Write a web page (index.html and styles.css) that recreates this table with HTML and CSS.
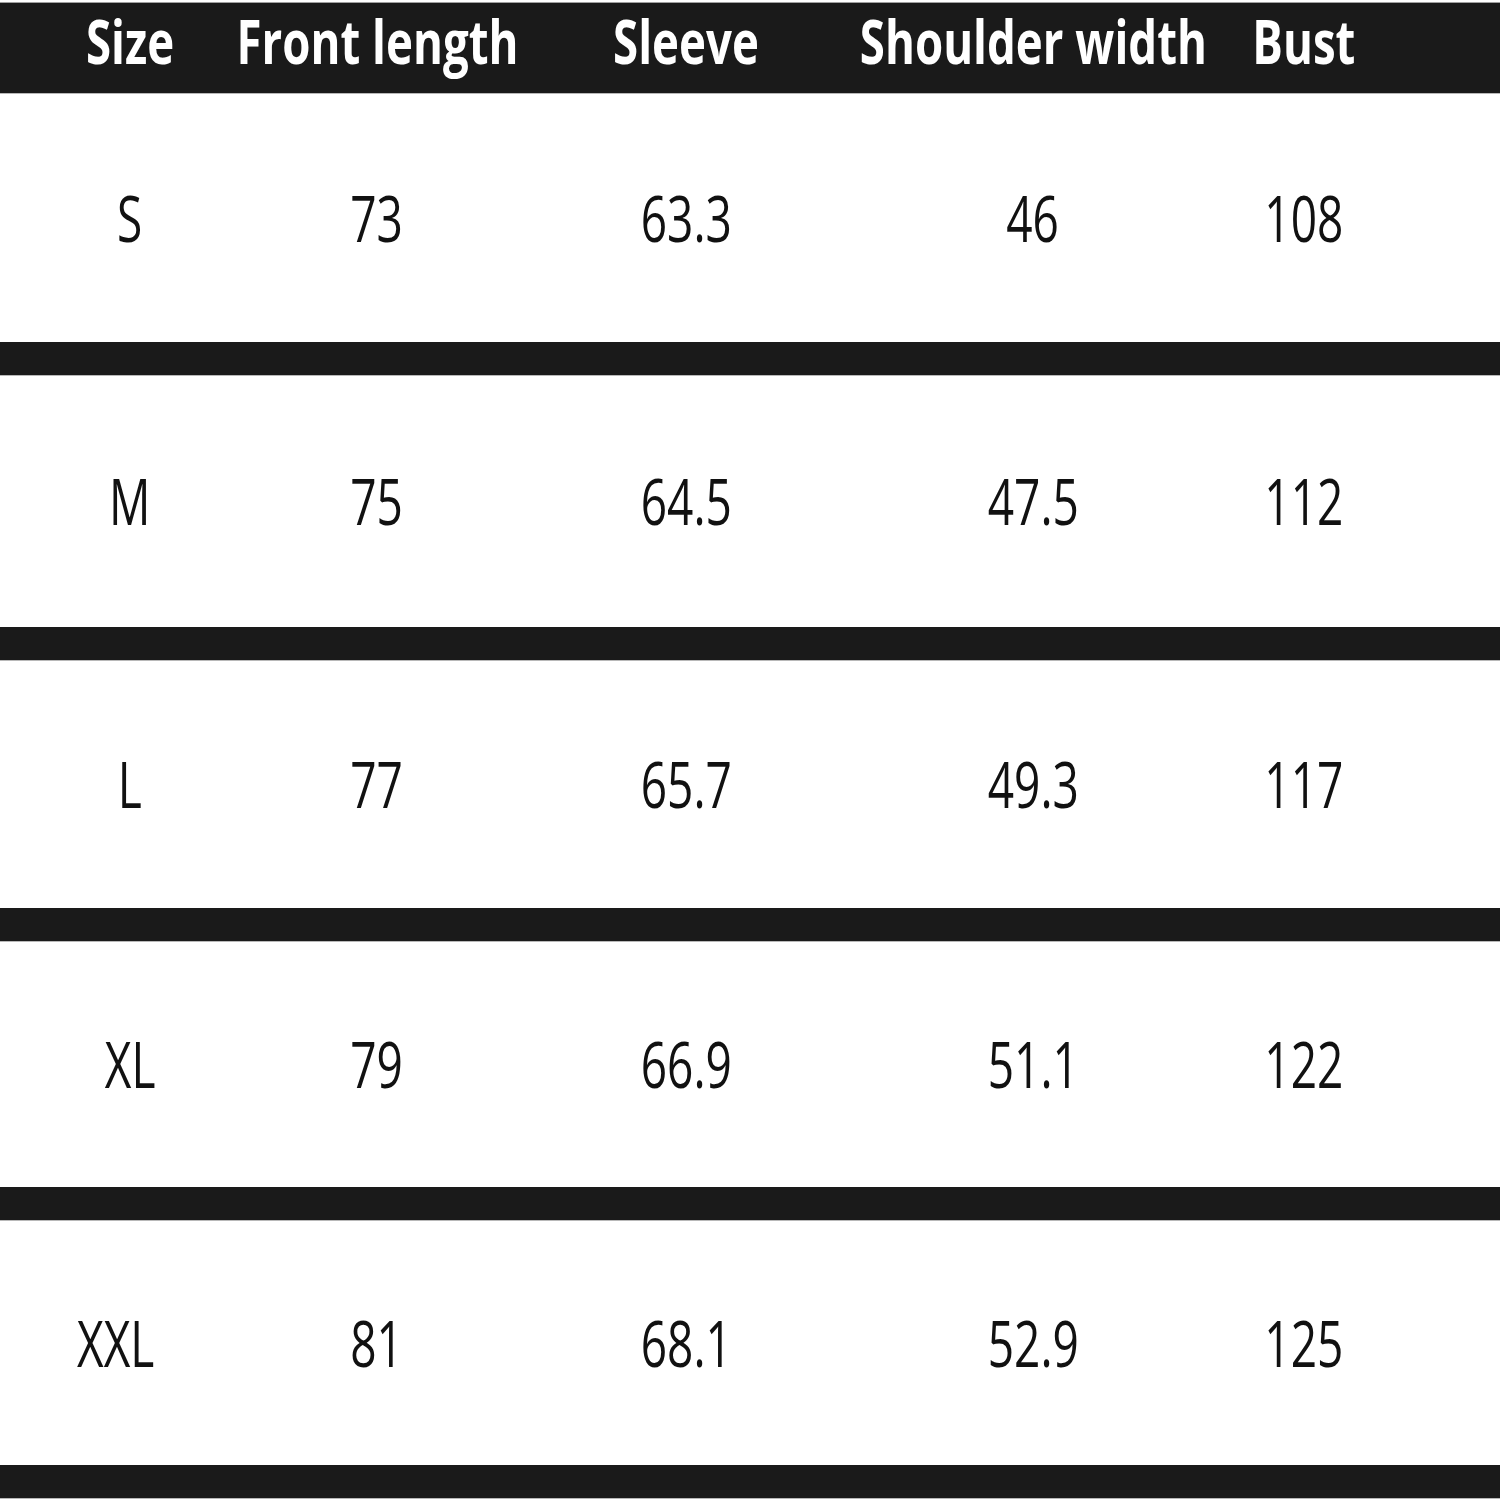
FILE: index.html
```html
<!DOCTYPE html>
<html lang="en">
<head>
<meta charset="utf-8">
<title>Size chart</title>
<link rel="stylesheet" href="styles.css">
</head>
<body>
<div class="chart">
  <div class="row head">
    <div class="cell"><span class="t">Size</span></div>
    <div class="cell"><span class="t">Front length</span></div>
    <div class="cell"><span class="t">Sleeve</span></div>
    <div class="cell"><span class="t">Shoulder width</span></div>
    <div class="cell"><span class="t">Bust</span></div>
  </div>
  <div class="row r1">
    <div class="cell"><span class="t">S</span></div>
    <div class="cell"><span class="t">73</span></div>
    <div class="cell"><span class="t">63.3</span></div>
    <div class="cell"><span class="t">46</span></div>
    <div class="cell"><span class="t">108</span></div>
  </div>
  <div class="row r2">
    <div class="cell"><span class="t">M</span></div>
    <div class="cell"><span class="t">75</span></div>
    <div class="cell"><span class="t">64.5</span></div>
    <div class="cell"><span class="t">47.5</span></div>
    <div class="cell"><span class="t">112</span></div>
  </div>
  <div class="row r3">
    <div class="cell"><span class="t">L</span></div>
    <div class="cell"><span class="t">77</span></div>
    <div class="cell"><span class="t">65.7</span></div>
    <div class="cell"><span class="t">49.3</span></div>
    <div class="cell"><span class="t">117</span></div>
  </div>
  <div class="row r4">
    <div class="cell"><span class="t">XL</span></div>
    <div class="cell"><span class="t">79</span></div>
    <div class="cell"><span class="t">66.9</span></div>
    <div class="cell"><span class="t">51.1</span></div>
    <div class="cell"><span class="t">122</span></div>
  </div>
  <div class="row r5">
    <div class="cell xxl"><span class="t">XXL</span></div>
    <div class="cell"><span class="t">81</span></div>
    <div class="cell"><span class="t">68.1</span></div>
    <div class="cell"><span class="t">52.9</span></div>
    <div class="cell"><span class="t">125</span></div>
  </div>
</div>
</body>
</html>
```
FILE: styles.css
```css
html, body {
  margin: 0;
  padding: 0;
  background: #ffffff;
}
.chart {
  width: 1500px;
  height: 1500px;
  padding-top: 2px;
  box-sizing: border-box;
  font-family: "Open Sans", "Liberation Sans", sans-serif;
  color: #111111;
}
.row {
  display: grid;
  grid-template-columns: 260px 234px 384px 310px 232px 1fr;
  align-items: center;
  box-sizing: border-box;
  border-bottom: 33px solid #1a1a1a;
  box-shadow: 0 1px 0 #b8b8b8;
}
.cell {
  display: flex;
  justify-content: center;
}
.t {
  display: inline-block;
  transform: scaleX(0.72);
  white-space: nowrap;
  line-height: 1;
}
.head {
  height: 91px;
  border-top: 1px solid #a0a0a0;
  border-bottom: none;
  background: #1a1a1a;
  color: #ffffff;
  font-weight: 700;
  font-size: 60px;
  padding-bottom: 14px;
}
.head .t {
  transform: scaleX(0.76);
}
.r1, .r2, .r3, .r4, .r5 {
  font-size: 64px;
  font-weight: 500;
}
.r1 { height: 282px; }
.r2 { height: 285px; }
.r3 { height: 281px; }
.r4 { height: 279px; }
.r5 { height: 278px; }
.xxl {
  padding-right: 28px;
}
```
